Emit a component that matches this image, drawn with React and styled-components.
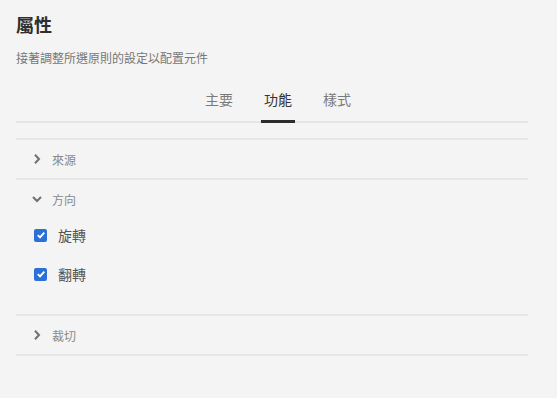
import React, { useState } from 'react';
import styled, { createGlobalStyle } from 'styled-components';

const GlobalStyle = createGlobalStyle`
  html, body {
    margin: 0;
    padding: 0;
    background: #f4f4f4;
    font-family: "Noto Sans CJK TC", "Noto Sans", sans-serif;
  }
`;

const Panel = styled.div`
  width: 512px;
  margin-left: 16px;
  padding-top: 12px;
`;

const Title = styled.h2`
  margin: 0;
  font-size: 18px;
  line-height: 24px;
  font-weight: 700;
  color: #2e2e2e;
`;

const Subtitle = styled.p`
  margin: 13.5px 0 0;
  font-size: 12px;
  line-height: 16px;
  color: #767676;
`;

const TabBar = styled.div`
  margin-top: 13px;
  display: flex;
  justify-content: center;
  gap: 25px;
  padding-left: 12px;
  border-bottom: 2px solid #e6e6e6;
`;

const Tab = styled.button`
  all: unset;
  cursor: pointer;
  font-family: inherit;
  font-size: 14px;
  line-height: 20px;
  padding: 10px 3px 11.5px;
  margin-bottom: -2px;
  color: ${(p) => (p.$active ? '#333' : '#7a7a7a')};
  border-bottom: 3px solid ${(p) => (p.$active ? '#2c2c2c' : 'transparent')};
`;

const Sections = styled.div`
  margin-top: 15px;
  border-bottom: 2px solid #e6e6e6;
`;

const Item = styled.div`
  border-top: 2px solid #e6e6e6;
`;

const Header = styled.button`
  all: unset;
  box-sizing: border-box;
  width: 100%;
  height: 38px;
  display: flex;
  align-items: center;
  gap: 9px;
  padding-left: 15px;
  cursor: pointer;
  font-family: inherit;
  font-size: 12px;
  color: #8a8a8a;
`;

const ChevronBox = styled.span`
  width: 12px;
  height: 12px;
  display: flex;
  align-items: center;
  justify-content: center;
`;

const Content = styled.div`
  display: flex;
  flex-direction: column;
  gap: 5px;
  padding: 0 0 23px 18px;
`;

const CheckRow = styled.label`
  height: 34px;
  display: flex;
  align-items: center;
  gap: 11px;
  font-size: 14px;
  color: #555;
  cursor: pointer;
`;

const Box = styled.span`
  box-sizing: border-box;
  width: 13px;
  height: 13px;
  border-radius: 2px;
  background: ${(p) => (p.$checked ? '#2b6fd8' : 'transparent')};
  border: ${(p) => (p.$checked ? 'none' : '1.5px solid #888')};
  display: flex;
  align-items: center;
  justify-content: center;
`;

const Chevron = ({ open }) => (
  <ChevronBox>
    <svg width="12" height="12" viewBox="0 0 12 12">
      {open ? (
        <polyline points="2,4 6,8 10,4" fill="none" stroke="#707070" strokeWidth="2" />
      ) : (
        <polyline points="4,1.8 8,6 4,10.2" fill="none" stroke="#707070" strokeWidth="2" />
      )}
    </svg>
  </ChevronBox>
);

const Check = ({ label, checked, onToggle }) => (
  <CheckRow onClick={onToggle}>
    <Box $checked={checked}>
      {checked && (
        <svg width="10" height="10" viewBox="0 0 10 10">
          <polyline points="1.8,5.2 4,7.4 8.3,2.6" fill="none" stroke="#fff" strokeWidth="1.9" />
        </svg>
      )}
    </Box>
    {label}
  </CheckRow>
);

const tabs = ['主要', '功能', '樣式'];

export default function App() {
  const [active, setActive] = useState(1);
  const [open, setOpen] = useState({ source: false, direction: true, crop: false });
  const [checks, setChecks] = useState({ rotate: true, flip: true });

  const toggle = (k) => setOpen((o) => ({ ...o, [k]: !o[k] }));

  return (
    <>
      <GlobalStyle />
      <Panel>
        <Title>屬性</Title>
        <Subtitle>接著調整所選原則的設定以配置元件</Subtitle>
        <TabBar>
          {tabs.map((t, i) => (
            <Tab key={t} $active={i === active} onClick={() => setActive(i)}>
              {t}
            </Tab>
          ))}
        </TabBar>
        <Sections>
          <Item>
            <Header onClick={() => toggle('source')}>
              <Chevron open={open.source} />
              來源
            </Header>
          </Item>
          <Item>
            <Header onClick={() => toggle('direction')}>
              <Chevron open={open.direction} />
              方向
            </Header>
            {open.direction && (
              <Content>
                <Check
                  label="旋轉"
                  checked={checks.rotate}
                  onToggle={() => setChecks((c) => ({ ...c, rotate: !c.rotate }))}
                />
                <Check
                  label="翻轉"
                  checked={checks.flip}
                  onToggle={() => setChecks((c) => ({ ...c, flip: !c.flip }))}
                />
              </Content>
            )}
          </Item>
          <Item>
            <Header onClick={() => toggle('crop')}>
              <Chevron open={open.crop} />
              裁切
            </Header>
          </Item>
        </Sections>
      </Panel>
    </>
  );
}
